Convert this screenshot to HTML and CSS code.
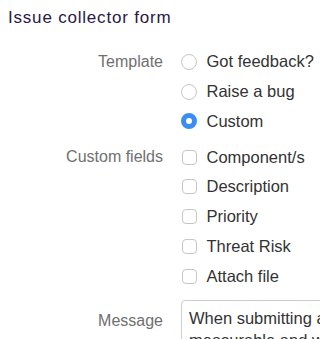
FILE: index.html
```html
<!DOCTYPE html>
<html lang="en">
<head>
<meta charset="utf-8">
<title>Issue collector form</title>
<link rel="stylesheet" href="styles.css">
</head>
<body>
<h1 class="title">Issue collector form</h1>
<div class="form">
  <div class="field">
    <div class="label">Template</div>
    <div class="controls">
      <div class="option"><span class="radio"></span><span class="text">Got feedback?</span></div>
      <div class="option"><span class="radio"></span><span class="text">Raise a bug</span></div>
      <div class="option"><span class="radio checked"></span><span class="text">Custom</span></div>
    </div>
  </div>
  <div class="field group">
    <div class="label">Custom fields</div>
    <div class="controls">
      <div class="option"><span class="checkbox"></span><span class="text">Component/s</span></div>
      <div class="option"><span class="checkbox"></span><span class="text">Description</span></div>
      <div class="option"><span class="checkbox"></span><span class="text">Priority</span></div>
      <div class="option"><span class="checkbox"></span><span class="text">Threat Risk</span></div>
      <div class="option"><span class="checkbox"></span><span class="text">Attach file</span></div>
    </div>
  </div>
  <div class="field message">
    <div class="label msg-label">Message</div>
    <div class="controls">
      <div class="textarea">When submitting a bug, please make it<br>measurable and with clear steps to reproduce</div>
    </div>
  </div>
</div>
</body>
</html>
```

FILE: styles.css
```css
html {
  overflow: hidden;
  background: #ffffff;
}
body {
  margin: 8px;
  font-family: "Liberation Sans", Arial, Helvetica, sans-serif;
  color: #333333;
}
.title {
  margin: 0 0 19px 0;
  font-size: 17px;
  line-height: 20px;
  font-weight: normal;
  letter-spacing: 0.8px;
  color: #2a1846;
}
.field {
  display: grid;
  grid-template-columns: 155px 1fr;
  column-gap: 18px;
}
.group {
  margin-top: 6px;
}
.label {
  text-align: right;
  font-size: 16px;
  line-height: 29.75px;
  color: #707070;
}
.controls {
  display: flex;
  flex-direction: column;
  min-width: 0;
}
.option {
  display: flex;
  align-items: center;
  height: 29.75px;
  font-size: 16.5px;
  color: #333333;
  white-space: nowrap;
}
.radio {
  box-sizing: border-box;
  flex: none;
  width: 16px;
  height: 16px;
  margin-right: 9.5px;
  border: 1px solid #c6c6c6;
  border-radius: 50%;
  background: #ffffff;
}
.radio.checked {
  border: 5px solid #3a8ef3;
  background: #ffffff;
}
.checkbox {
  box-sizing: border-box;
  flex: none;
  width: 15px;
  height: 15px;
  margin-left: 0.5px;
  margin-right: 10px;
  border: 1px solid #c6c6c6;
  border-radius: 4px;
  background: #ffffff;
}
.message {
  margin-top: 9px;
}
.msg-label {
  line-height: 22px;
  padding-top: 10px;
}
.textarea {
  width: 240px;
  box-sizing: border-box;
  border: 1px solid #cccccc;
  border-radius: 4px;
  padding: 6px 7px;
  font-size: 16.5px;
  line-height: 22px;
  color: #333333;
  white-space: nowrap;
  overflow: hidden;
  height: 80px;
}
```
